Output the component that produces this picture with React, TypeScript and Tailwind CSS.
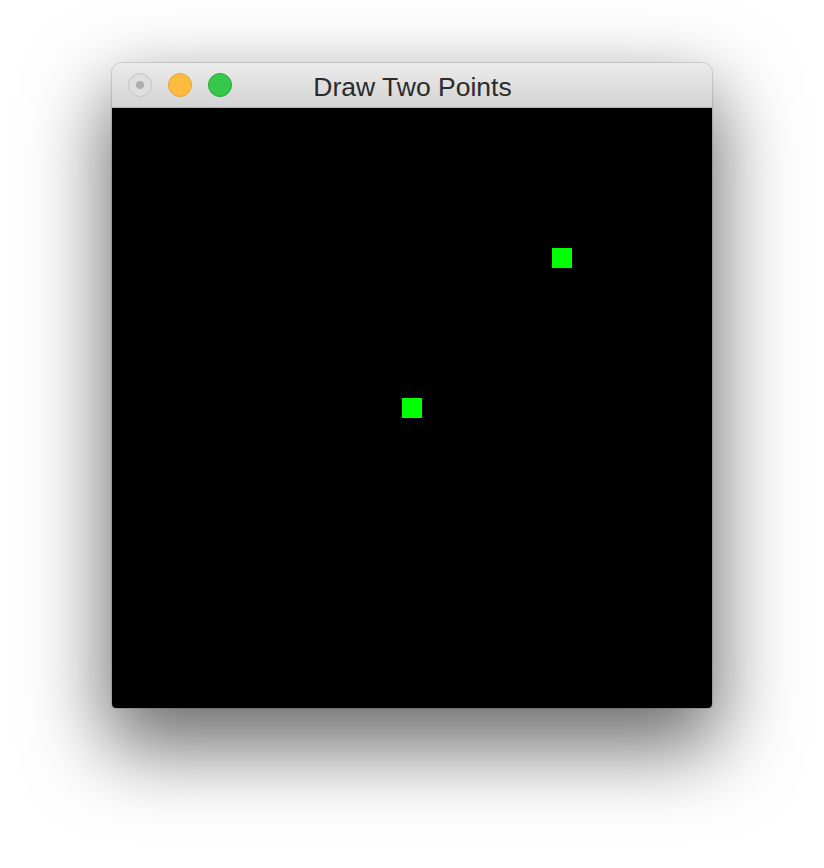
const points = [
  { x: 440, y: 140 },
  { x: 290, y: 290 },
];

function TrafficLights() {
  return (
    <div className="flex items-center gap-4 absolute left-4 top-0 h-full">
      <span className="flex items-center justify-center w-6 h-6 rounded-full bg-[#dedede] border border-[#c4c4c4]">
        <span className="w-2 h-2 rounded-full bg-[#adadad]" />
      </span>
      <span className="w-6 h-6 rounded-full bg-[#fdbc40] border border-[#dfa33a]" />
      <span className="w-6 h-6 rounded-full bg-[#35c84a] border border-[#2aa63b]" />
    </div>
  );
}

export default function App() {
  return (
    <div className="w-[824px] h-[868px] bg-white overflow-hidden pt-[63px] pl-[112px]">
      <div className="w-[600px] rounded-t-[10px] rounded-b-[4px] shadow-[0_34px_80px_6px_rgba(0,0,0,0.58),0_0_0_1px_rgba(0,0,0,0.12)] overflow-hidden">
        <div className="relative h-[45px] flex items-center justify-center bg-gradient-to-b from-[#ebebeb] to-[#d4d4d4] border-b border-[#b1b1b1]">
          <TrafficLights />
          <span className="text-[26.5px] text-[#2b2b2b] font-['Liberation_Sans',Arial,sans-serif] leading-none mt-[4px] pl-[1px]">
            Draw Two Points
          </span>
        </div>
        <div className="relative w-[600px] h-[600px] bg-black">
          {points.map((p, i) => (
            <div
              key={i}
              className="absolute w-5 h-5 bg-[#00ff00]"
              style={{ left: p.x, top: p.y }}
            />
          ))}
        </div>
      </div>
    </div>
  );
}
